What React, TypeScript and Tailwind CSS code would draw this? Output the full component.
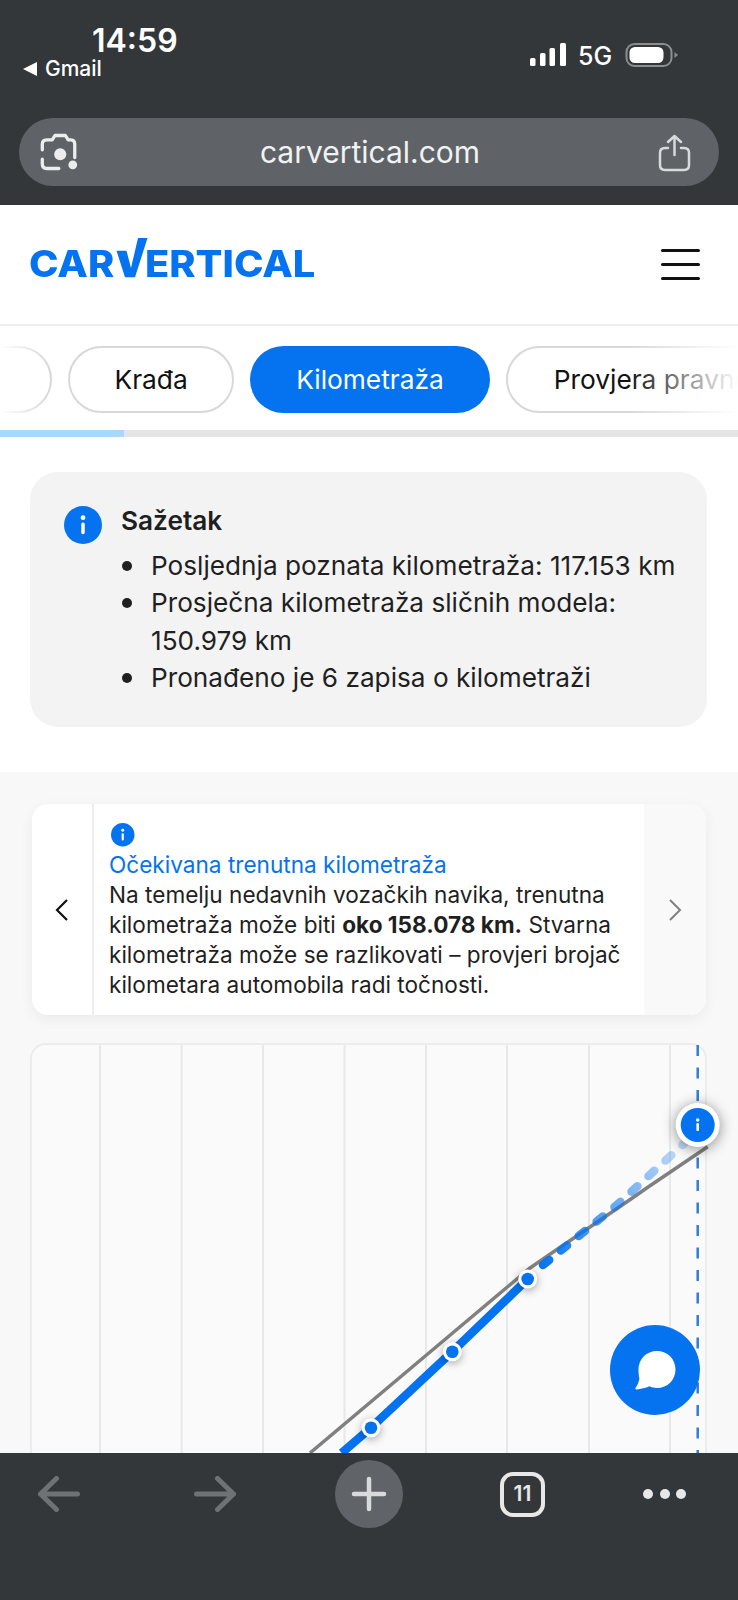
const BLUE = "#0573ef";

function InfoIcon({ className }: { className: string }) {
  return (
    <svg viewBox="0 0 24 24" className={className} aria-hidden>
      <circle cx="12" cy="12" r="12" fill={BLUE} />
      <circle cx="12" cy="7.4" r="1.5" fill="#fff" />
      <rect x="10.9" y="10.4" width="2.2" height="7.4" rx="1" fill="#fff" />
    </svg>
  );
}

function StatusIcons() {
  return (
    <svg viewBox="525 38 156 34" className="h-[34px] w-[156px]" aria-hidden>
      <rect x="530" y="58" width="5.5" height="8" rx="1.5" fill="#fff" />
      <rect x="540" y="53" width="5.5" height="13" rx="1.5" fill="#fff" />
      <rect x="549.5" y="48" width="5.5" height="18" rx="1.5" fill="#fff" />
      <rect x="560" y="43" width="6" height="23" rx="1.5" fill="#fff" />
      <rect x="626.5" y="44" width="45" height="22" rx="8" fill="none" stroke="#8b8d8f" strokeWidth="2" />
      <rect x="629.5" y="47" width="34" height="16" rx="5.5" fill="#fff" />
      <path d="M674.5 52 L678 55 L674.5 58 Z" fill="#8b8d8f" />
    </svg>
  );
}

function LensIcon() {
  return (
    <svg viewBox="40 133 40 38" className="h-[42px] w-[44px]" fill="none" stroke="#eceded" strokeWidth="3" strokeLinecap="round" aria-hidden>
      <path d="M43 150 V145 Q43 141 47 141 H52 L54.5 137 H64 L66.5 141 H69 Q72.5 141 72.5 145 V157" strokeLinejoin="round" />
      <path d="M43 158.5 V163 Q43 167 47 167 H58" />
      <circle cx="59.3" cy="154" r="5.5" fill="#eceded" stroke="none" />
      <circle cx="70.7" cy="163.7" r="4" fill="#eceded" stroke="none" />
    </svg>
  );
}

function ShareIcon() {
  return (
    <svg viewBox="658 133 36 39" className="h-[39px] w-[36px]" fill="none" stroke="#d8dadb" strokeWidth="2.5" strokeLinecap="round" strokeLinejoin="round" aria-hidden>
      <path d="M669 148 H666 Q661 148 661 153 V165 Q661 170 666 170 H685 Q690 170 690 165 V153 Q690 148 685 148 H682" />
      <path d="M675.5 155 V137 M669 142 L675.5 136 L682 142" />
    </svg>
  );
}

function Logo() {
  return (
    <div className="mb-[14px] flex h-[40px] w-[284px] items-end text-[36.5px] leading-[26.6px] font-extrabold text-[#0573ef]">
      <span className="-ml-[1px] w-[87px] origin-left scale-x-[1.09]">CAR</span>
      <svg viewBox="116 238 32 40" className="-ml-[0.5px] h-[40px] w-[32px] shrink-0" aria-hidden>
        <polygon points="116.5,250.7 126.5,250.7 131,268 138,238 147.5,238 135,277.3 125,277.3" fill={BLUE} />
      </svg>
      <span className="-ml-[3px] origin-left scale-x-[1.09]">ERTICAL</span>
    </div>
  );
}

function Chart() {
  const grid = [100, 181.6, 263, 344.5, 426, 507, 589, 670];
  return (
    <div className="mt-[28px] ml-[30px] h-[440px] w-[677px] rounded-t-[16px] border-2 border-b-0 border-[#ececec] bg-[#fafafa]">
      <svg viewBox="32 1045 673 408" className="h-[408px] w-[673px] overflow-visible" aria-hidden>
        <defs>
          <linearGradient id="fade" gradientUnits="userSpaceOnUse" x1="540" y1="1268" x2="690" y2="1138">
            <stop offset="0" stopColor={BLUE} />
            <stop offset="1" stopColor={BLUE} stopOpacity="0.18" />
          </linearGradient>
        </defs>
        {grid.map((x) => (
          <line key={x} x1={x} x2={x} y1="1045" y2="1453" stroke="#e8e8e8" strokeWidth="2" />
        ))}
        <line x1="697.7" x2="697.7" y1="1045" y2="1453" stroke="#2f7dd8" strokeWidth="2.5" strokeDasharray="11 11.5" />
        <path d="M310 1453 L446.7 1338 L530 1268 C 570 1240 610 1214 646.7 1188 L707.7 1146.7" fill="none" stroke="#808080" strokeWidth="3.5" />
        <path d="M543 1265 L617 1205 L690 1138" fill="none" stroke="url(#fade)" strokeWidth="8.5" strokeLinecap="round" strokeDasharray="8 15" />
        <path d="M341.7 1453 L371 1427.7 L452.3 1351.7 L527.7 1279" fill="none" stroke={BLUE} strokeWidth="8.5" />
        {[[371, 1427.7], [452.3, 1351.7], [527.7, 1279]].map(([cx, cy]) => (
          <g key={cx} className="drop-shadow-[0_2px_4px_rgba(0,0,0,0.35)]">
            <circle cx={cx} cy={cy} r="9.5" fill="#fff" />
            <circle cx={cx} cy={cy} r="6.3" fill={BLUE} />
          </g>
        ))}
        <g className="drop-shadow-[0_2px_7px_rgba(0,0,0,0.45)]">
          <circle cx="697.7" cy="1125" r="22" fill="#fff" />
          <circle cx="697.7" cy="1125" r="17" fill={BLUE} />
          <circle cx="697.7" cy="1120" r="1.7" fill="#fff" />
          <rect x="696.4" y="1123" width="2.6" height="8" rx="1" fill="#fff" />
        </g>
      </svg>
    </div>
  );
}

function ToolbarArrow({ flip }: { flip?: boolean }) {
  return (
    <svg viewBox="0 0 42 36" className={flip ? "h-[36px] w-[42px] -scale-x-100" : "h-[36px] w-[42px]"} fill="none" stroke="#6f7274" strokeWidth="5" strokeLinecap="round" strokeLinejoin="round" aria-hidden>
      <path d="M2.5 18 H39.5 M18.5 2.5 L2.5 18 L18.5 33.5" />
    </svg>
  );
}

const summary = [
  <>Posljednja poznata kilometraža: 117.153 km</>,
  <>
    Prosječna kilometraža sličnih modela:
    <br />
    150.979 km
  </>,
  <>Pronađeno je 6 zapisa o kilometraži</>,
];

export default function App() {
  return (
    <div className="flex h-[1600px] w-[738px] flex-col overflow-hidden bg-white font-['Inter',sans-serif] text-[#1f1f1f]">
      {/* browser chrome, top */}
      <header className="h-[205px] shrink-0 bg-[#34373a] text-white">
        <div className="flex h-[118px] items-start justify-between pr-[57px] pl-[23px]">
          <div className="pt-[22px]">
            <p className="ml-[69px] text-[32px] leading-[38px] font-semibold">14:59</p>
            <div className="-mt-[3px] flex items-center gap-[8px]">
              <svg viewBox="0 0 14 14" className="h-[14px] w-[14px]" aria-hidden>
                <polygon points="0,7 14,0 14,14" fill="#fff" />
              </svg>
              <span className="text-[21px] leading-[24px] font-medium">Gmail</span>
            </div>
          </div>
          <div className="relative mt-[38px] h-[34px] w-[156px]">
            <StatusIcons />
            <span className="absolute top-[3px] left-[53px] text-[25px] leading-[30px] font-medium">5G</span>
          </div>
        </div>
        <div className="mx-[19px] flex h-[68px] items-center justify-between rounded-full bg-[#5f6367] pr-[26px] pl-[20px]">
          <LensIcon />
          <span className="text-[30px] leading-none text-[#f1f2f2]">carvertical.com</span>
          <ShareIcon />
        </div>
      </header>

      <main className="relative min-h-0 flex-1 overflow-hidden">
        <nav className="flex h-[121px] items-center justify-between border-b-2 border-[#eeeeee] pr-[38px] pl-[30px]">
          <Logo />
          <div className="flex w-[39px] flex-col gap-[11px]">
            <span className="h-[3px] rounded-full bg-[#111]" />
            <span className="h-[3px] rounded-full bg-[#111]" />
            <span className="h-[3px] rounded-full bg-[#111]" />
          </div>
        </nav>

        <div className="relative flex gap-4 overflow-hidden pt-[20px] text-[26.3px] leading-[32px]">
          <div className="-ml-[60px] flex h-[67px] w-[112px] shrink-0 items-center rounded-full border-2 border-[#d8d8d8]" />
          <div className="flex h-[67px] shrink-0 items-center rounded-full border-2 border-[#d8d8d8] px-[44.5px] text-[#111]">Krađa</div>
          <div className="flex h-[67px] shrink-0 items-center rounded-full bg-[#0573ef] px-[46px] text-white">Kilometraža</div>
          <div className="flex h-[67px] shrink-0 items-center rounded-full border-2 border-[#d8d8d8] px-[46px] whitespace-nowrap text-[#111]">Provjera pravnog statusa</div>
          <div className="absolute top-0 left-0 h-full w-[50px] bg-gradient-to-r from-white to-white/0" />
          <div className="absolute top-0 right-0 h-full w-[110px] bg-gradient-to-r from-white/0 to-white" />
        </div>
        <div className="mt-[17px] h-[7px] bg-[#e5e5e5]">
          <div className="h-full w-[124px] bg-[#a8d8ff]" />
        </div>

        <section className="mt-[35px] ml-[30px] flex h-[255px] w-[677px] gap-[19px] rounded-[28px] bg-[#f3f3f3] pt-[30px] pl-[34px]">
          <InfoIcon className="mt-[4px] h-[38px] w-[38px] shrink-0" />
          <div className="text-[26.2px] leading-[37.5px]">
            <h2 className="font-semibold">Sažetak</h2>
            <ul className="mt-[7px]">
              {summary.map((item, i) => (
                <li key={i} className="flex gap-[19px] pl-[1px]">
                  <span className="mt-[14px] h-[10px] w-[10px] shrink-0 rounded-full bg-[#1f1f1f]" />
                  <span>{item}</span>
                </li>
              ))}
            </ul>
          </div>
        </section>

        <div className="mt-[45px] h-[700px] bg-[#f8f8f8] pt-[32px]">
          <section className="ml-[32px] grid h-[211px] w-[674px] grid-cols-[62px_1fr_62px] rounded-[16px] bg-white shadow-[0_4px_14px_rgba(0,0,0,0.06)]">
            <div className="flex items-center justify-center border-r-2 border-[#eeeeee] text-[#111]">
              <svg viewBox="0 0 16 24" className="h-[24px] w-[16px]" fill="none" stroke="#111" strokeWidth="2.2" aria-hidden>
                <path d="M13 2 L3 12 L13 22" />
              </svg>
            </div>
            <div className="pt-[19px] pl-[15px] text-[22.6px] leading-[30px]">
              <InfoIcon className="ml-[2px] h-[23.5px] w-[23.5px]" />
              <p className="mt-[3px] text-[#0573ef]">Očekivana trenutna kilometraža</p>
              <p>
                Na temelju nedavnih vozačkih navika, trenutna
                <br />
                kilometraža može biti <strong className="font-bold">oko 158.078 km.</strong> Stvarna
                <br />
                kilometraža može se razlikovati – provjeri brojač
                <br />
                kilometara automobila radi točnosti.
              </p>
            </div>
            <div className="flex items-center justify-center rounded-r-[16px] bg-[#f9f9f9]">
              <svg viewBox="0 0 16 24" className="h-[24px] w-[16px]" fill="none" stroke="#808080" strokeWidth="2" aria-hidden>
                <path d="M3 2 L13 12 L3 22" />
              </svg>
            </div>
          </section>
          <Chart />
        </div>

        {/* floating chat button */}
        <button className="absolute top-[1120px] left-[610px] flex h-[90px] w-[90px] items-center justify-center rounded-full bg-[#0573ef]">
          <svg viewBox="0 0 44 44" className="h-[44px] w-[44px]" aria-hidden>
            <path d="M24 3 C 34.5 3 42.5 11 42.5 21.5 C 42.5 32 34.5 40 24 40 C 21 40 18.5 39.3 16.5 38.3 C 12.5 40 8 41 3.6 41.5 C 2.5 41.6 2 40.7 2.6 39.8 C 4.6 37 5.8 34 6.4 30.5 C 5.7 27.8 5.5 24.5 5.5 21.5 C 5.5 11 13.5 3 24 3 Z" fill="#fff" />
          </svg>
        </button>
      </main>

      {/* browser chrome, bottom */}
      <footer className="flex h-[147px] shrink-0 items-start bg-[#34373a] pt-[7px] pl-[38px]">
        <div className="flex h-[68px] items-center">
          <ToolbarArrow />
          <div className="ml-[114px]">
            <ToolbarArrow flip />
          </div>
          <div className="ml-[99px] flex h-[68px] w-[68px] items-center justify-center rounded-full bg-[#606367]">
            <svg viewBox="0 0 36 36" className="h-[36px] w-[36px]" stroke="#d8d9da" strokeWidth="4.5" strokeLinecap="round" aria-hidden>
              <path d="M18 3 V33 M3 18 H33" />
            </svg>
          </div>
          <div className="ml-[97px] flex h-[45px] w-[45px] items-center justify-center rounded-[13px] border-[4px] border-[#e8e8e8] text-[21px] font-semibold text-[#e8e8e8]">11</div>
          <div className="ml-[98px] flex gap-[6.5px]">
            <span className="h-[10px] w-[10px] rounded-full bg-[#e8e8e8]" />
            <span className="h-[10px] w-[10px] rounded-full bg-[#e8e8e8]" />
            <span className="h-[10px] w-[10px] rounded-full bg-[#e8e8e8]" />
          </div>
        </div>
      </footer>
    </div>
  );
}
